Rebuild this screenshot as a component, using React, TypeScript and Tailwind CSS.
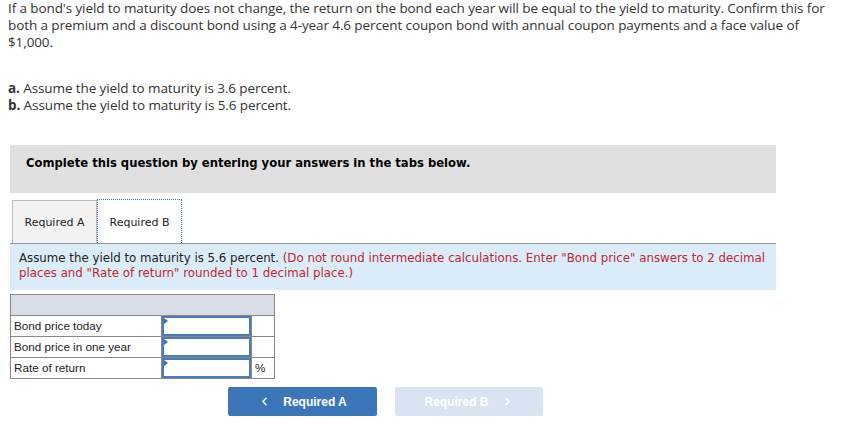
import { ChevronLeft, ChevronRight } from 'lucide-react'

const ROWS = [
  { label: 'Bond price today', unit: '' },
  { label: 'Bond price in one year', unit: '' },
  { label: 'Rate of return', unit: '%' },
]

export default function App() {
  return (
    <div className="w-[843px] h-[436px] bg-white text-[#333] overflow-hidden">
      {/* Question text */}
      <div className="pl-[8px] pr-[8px] text-[13.5px] leading-[17px] font-['Open_Sans',sans-serif] tracking-[-0.1px]">
        <p>
          If a bond's yield to maturity does not change, the return on the bond each year will be equal to the yield to maturity. Confirm this for both a premium and a discount bond using a 4-year 4.6 percent coupon bond with annual coupon payments and a face value of $1,000.
        </p>
        <p className="mt-[29px]"><b className="font-bold">a.</b> Assume the yield to maturity is 3.6 percent.</p>
        <p><b className="font-bold">b.</b> Assume the yield to maturity is 5.6 percent.</p>
      </div>

      <div className="ml-[10px] w-[766px] mt-[31px] font-['DejaVu_Sans',Verdana,sans-serif]">
        {/* Instruction bar */}
        <div className="h-[48px] bg-[#e0e0e0] pl-[16px] pt-[10px] text-[11.6px] font-bold text-black">
          Complete this question by entering your answers in the tabs below.
        </div>

        {/* Tabs */}
        <div className="mt-[6px] flex items-end pl-[2px] border-b border-[#999]">
          <div className="w-[85px] h-[43px] pt-[3px] flex items-center justify-center bg-[#f2f2f2] border border-b-0 border-[#bbb] text-[11px] text-[#222]">
            Required A
          </div>
          <div className="w-[85px] h-[44px] pt-[3px] flex items-center justify-center bg-white border border-dotted border-b-0 border-[#3a6fb0] text-[11px] text-[#222]">
            Required B
          </div>
        </div>

        {/* Prompt */}
        <div className="h-[46px] bg-[#dbecf9] pl-[9px] pt-[7px] text-[11.8px] leading-[15px] text-[#222]">
          Assume the yield to maturity is 5.6 percent.{' '}
          <span className="text-[#c1272d]">
            (Do not round intermediate calculations. Enter "Bond price" answers to 2 decimal places and "Rate of return" rounded to 1 decimal place.)
          </span>
        </div>
      </div>

      {/* Answer table */}
      <table className="ml-[10px] mt-[4px] border-collapse font-['Liberation_Sans',Arial,sans-serif] text-[11.7px] text-[#222]">
        <tbody>
          <tr className="h-[21px] bg-[#d9dde8]">
            <td colSpan={3} className="border border-[#888]" />
          </tr>
          {ROWS.map(r => (
            <tr key={r.label} className="h-[21px]">
              <td className="w-[151px] border border-[#888] pl-[3px] py-0">{r.label}</td>
              <td className="w-[90px] border border-[#888] p-0">
                <div className="relative h-[20px] border-2 border-[#4a7cba]">
                  <span className="absolute left-0 top-0 w-0 h-0 border-y-[3px] border-y-transparent border-l-[4px] border-l-[#3a6fb0]" />
                </div>
              </td>
              <td className="w-[23px] border border-[#888] pl-[3px] py-0">{r.unit}</td>
            </tr>
          ))}
        </tbody>
      </table>

      {/* Navigation */}
      <div className="mt-[8px] ml-[228px] flex gap-[18px] font-['Liberation_Sans',Arial,sans-serif] text-[12px] font-bold text-white">
        <button className="w-[149px] h-[29px] rounded-[2px] bg-[#3b76b9] flex items-center justify-center gap-[12px]">
          <ChevronLeft size={13} strokeWidth={2.5} />
          <span>Required A</span>
        </button>
        <button className="w-[148px] h-[29px] rounded-[2px] bg-[#d8e4f1] flex items-center justify-center gap-[12px]">
          <span>Required B</span>
          <ChevronRight size={13} strokeWidth={2.5} />
        </button>
      </div>
    </div>
  )
}
